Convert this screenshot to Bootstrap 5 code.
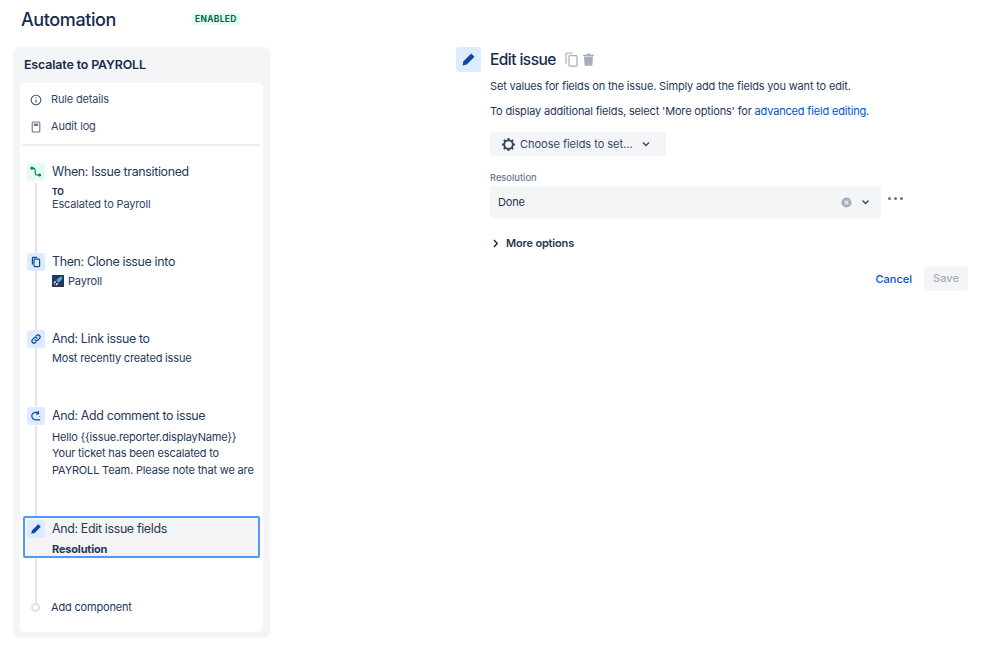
<!DOCTYPE html>
<html lang="en">
<head>
  <meta charset="UTF-8" />
  <meta name="viewport" content="width=device-width, initial-scale=1" />
  <title>Automation</title>
  <link href="https://cdn.jsdelivr.net/npm/bootstrap@5.3.0/dist/css/bootstrap.min.css" rel="stylesheet" />
  <style>
    body {
      font-family: Inter, "Liberation Sans", sans-serif;
      color: #172b4d;
      background: #fff;
      font-size: 11px;
      letter-spacing: -0.17px;
      overflow: hidden;
    }
    .page-head { height: 47px; padding: 9px 0 0 21px; }
    .page-title { font-size: 18px; font-weight: 500; line-height: 22px; width: 171px; margin: 0; letter-spacing: -0.4px; }
    .status-tag {
      background: #e3fcef; color: #006644; font-size: 8.4px; font-weight: 700;
      line-height: 12px; height: 12px; padding: 0 3px; border-radius: 2px; letter-spacing: .35px; margin-top: 4px;
    }
    .rule-panel { width: 257px; height: 591px; margin-left: 13px; background: #f4f5f7; border-radius: 6px; padding: 0 7px; flex-shrink: 0; }
    .rule-name { font-size: 12.4px; font-weight: 600; height: 36px; line-height: 36px; padding-left: 4px; margin: 0; letter-spacing: -0.13px; }
    .rule-card { position: relative; background: #fff; border-radius: 5px; height: 549px; padding: 3px; }
    .side-link { display: flex; align-items: center; height: 27px; color: #344563; }
    .side-link svg { width: 12px; height: 12px; margin: 0 9px 0 7px; flex-shrink: 0; }
    .side-links { height: 60px; margin-bottom: 17px; border-bottom: 2px solid #ebecf0; }
    .rail { position: absolute; left: 15px; top: 100px; height: 420px; width: 2px; background: #e4e6ea; }
    .step { position: relative; display: flex; padding-left: 4px; }
    .step-icon {
      width: 18px; height: 18px; border-radius: 3px; background: #deebff; color: #0747a6;
      display: flex; align-items: center; justify-content: center; flex-shrink: 0; margin-right: 7px;
    }
    .step-icon.is-green { background: #e3fcef; color: #006644; }
    .step-title { font-size: 12.4px; line-height: 18px; color: #253858; letter-spacing: -0.33px; }
    .step-body { color: #253858; line-height: 16.4px; margin-top: 2px; }
    .step-body.is-long { margin-top: 4px; }
    .step-to { font-size: 8.5px; font-weight: 700; line-height: 10px; margin-top: 6px; }
    .step-sub { line-height: 16px; color: #344563; margin-top: -1px; }
    .h-90 { height: 90px; }
    .h-77 { height: 77px; }
    .h-109 { height: 109px; }
    .step-active {
      height: 42px; padding: 2px 0 0 2px; background: #f4f4f4;
      border: 2px solid #4c9aff; border-radius: 2px;
    }
    .step-active .step-body { font-weight: 700; margin-top: 3px; }
    .add-row { display: flex; align-items: center; margin-top: 41px; padding-left: 8px; color: #253858; }
    .add-dot { width: 9px; height: 9px; border-radius: 50%; border: 2px solid #dfe1e6; background: #fff; margin-right: 11px; position: relative; }
    .project-mark { width: 12px; height: 12px; margin-right: 4px; flex-shrink: 0; }
    .edit-panel { width: 512px; margin-left: 186px; }
    .edit-head { display: flex; align-items: center; height: 25px; margin-bottom: 6px; }
    .edit-icon { width: 25px; height: 25px; background: #deebff; color: #0747a6; border-radius: 3px; display: flex; align-items: center; justify-content: center; margin-right: 9px; }
    .edit-title { font-size: 15.5px; font-weight: 500; margin: 0 9px 0 0; line-height: 25px; letter-spacing: -0.55px; }
    .edit-form { padding-left: 34px; color: #253858; }
    .edit-text { margin: 0; height: 25px; line-height: 16px; }
    .edit-form a { color: #0052cc; text-decoration: none; }
    .field-btn {
      display: inline-flex; align-items: center; width: 176px; height: 24px; background: #f4f5f7; border: 0; border-radius: 3px;
      padding: 0 0 0 11px; color: #344563; font-size: 11px; font-weight: 400; margin-top: 4px; letter-spacing: -0.02px;
    }
    .btn-caret { margin-left: 9px; }
    .field-label { font-size: 9.3px; font-weight: 500; color: #6b778c; line-height: 12px; margin-top: 16px; margin-bottom: 2px; letter-spacing: 0; }
    .select-box { width: 391px; height: 32px; background: #f4f5f7; border-radius: 3px; display: flex; align-items: center; padding: 0 11px 0 8px; }
    .select-caret { margin-left: 1px; }
    .more-dots { display: flex; gap: 3px; margin: 11px 0 0 7px; }
    .more-dots i { width: 3px; height: 3px; border-radius: 50%; background: #6b778c; }
    .more-opts { display: flex; align-items: center; font-weight: 600; margin-top: 18px; line-height: 14px; color: #253858; }
    .more-opts svg { margin: 0 7px 0 3px; }
    .form-actions { display: flex; justify-content: flex-end; align-items: center; margin-top: 16px; gap: 12px; }
    .btn-cancel { color: #0052cc; font-weight: 500; background: none; border: 0; padding: 2px 0 0; font-size: 11px; }
    .btn-save { width: 44px; height: 25px; background: #f4f5f7; color: #a5adba; border: 0; border-radius: 3px; font-weight: 500; font-size: 11px; padding: 0; }
  </style>
</head>
<body>
  <div class="page-head d-flex">
    <h1 class="page-title">Automation</h1>
    <span class="status-tag">ENABLED</span>
  </div>

  <div class="d-flex">
    <div class="rule-panel">
      <h2 class="rule-name">Escalate to PAYROLL</h2>
      <div class="rule-card">
        <div class="rail"></div>
        <div class="side-links">
          <div class="side-link">
            <svg viewBox="0 0 12 12" fill="none" stroke="#42526e" stroke-width="1.1"><circle cx="6" cy="6" r="4.8"/><path d="M6 5.4v3M6 3.2v1"/></svg>
            Rule details
          </div>
          <div class="side-link">
            <svg viewBox="0 0 12 12" fill="none" stroke="#6b778c" stroke-width="1.1"><rect x="2.2" y="1" width="7.6" height="10" rx="1"/><path d="M3.8 2.6h4.4v2.4H3.8z" fill="#6b778c" stroke="none"/></svg>
            Audit log
          </div>
        </div>
        <div class="step h-90">
          <div class="step-icon is-green">
            <svg width="12" height="12" viewBox="0 0 12 12" fill="none" stroke="#00875a" stroke-width="1.2"><path d="M2 2.2h1.6c.8 0 1.2.5 1.3 1.2l.6 4.4c.1.8.5 1.2 1.3 1.2H9"/><circle cx="1.9" cy="2.2" r="1" fill="#00875a"/><circle cx="9.6" cy="9" r="1" fill="#00875a"/></svg>
          </div>
          <div>
            <div class="step-title">When: Issue transitioned</div>
            <div class="step-to">TO</div>
            <div class="step-sub">Escalated to Payroll</div>
          </div>
        </div>
        <div class="step h-77">
          <div class="step-icon">
            <svg width="12" height="12" viewBox="0 0 12 12" fill="none" stroke="#0747a6" stroke-width="1.2"><rect x="4" y="3.2" width="5.6" height="7.4" rx=".8"/><path d="M2.4 8.4V2.2c0-.5.3-.8.8-.8h4"/></svg>
          </div>
          <div>
            <div class="step-title">Then: Clone issue into</div>
            <div class="step-body d-flex align-items-center">
              <svg class="project-mark" viewBox="0 0 12 12"><rect width="12" height="12" fill="#253858"/><path d="M10.5 1.5C8 1.7 6 3 4.3 5.5l2.2 2.2C9 6 10.3 4 10.5 1.5z" fill="#4bb5d9"/><path d="M4 6L2.2 6.6 1.4 8.4l2-.3zM6.2 8l-.6 1.8-1.8.8.3-2z" fill="#e9eef5"/><path d="M3 8.8l-1.4 1.6 2-.6z" fill="#ff8b5a"/></svg>
              Payroll
            </div>
          </div>
        </div>
        <div class="step h-77">
          <div class="step-icon">
            <svg width="12" height="12" viewBox="0 0 12 12" fill="none" stroke="#0747a6" stroke-width="1.2" stroke-linecap="round"><path d="M5 7a2 2 0 0 0 2.9 0l1.6-1.6a2 2 0 0 0-2.9-2.9l-.7.7"/><path d="M7 5a2 2 0 0 0-2.9 0L2.5 6.6a2 2 0 0 0 2.9 2.9l.7-.7"/></svg>
          </div>
          <div>
            <div class="step-title">And: Link issue to</div>
            <div class="step-body">Most recently created issue</div>
          </div>
        </div>
        <div class="step h-109">
          <div class="step-icon">
            <svg width="12" height="12" viewBox="0 0 12 12" fill="none" stroke="#0747a6" stroke-width="1.2" stroke-linecap="round"><path d="M7.6 2.8A3.8 3.8 0 1 0 6 9.8h3.6"/><path d="M8.4 1.4v2.4H6.2"/><circle cx="9.8" cy="6.4" r=".5" fill="#0747a6" stroke="none"/></svg>
          </div>
          <div>
            <div class="step-title">And: Add comment to issue</div>
            <div class="step-body is-long">Hello {{issue.reporter.displayName}}<br />Your ticket has been escalated to<br />PAYROLL Team. Please note that we are</div>
          </div>
        </div>
        <div class="step step-active">
          <div class="step-icon">
            <svg width="12" height="12" viewBox="0 0 12 12" fill="#0747a6"><path d="M8.2 1.2l2.6 2.6-6.2 6.2-3.4.8.8-3.4z"/></svg>
          </div>
          <div>
            <div class="step-title">And: Edit issue fields</div>
            <div class="step-body">Resolution</div>
          </div>
        </div>
        <div class="add-row">
          <span class="add-dot"></span>
          Add component
        </div>
      </div>
    </div>

    <div class="edit-panel">
      <div class="edit-head">
        <div class="edit-icon">
          <svg width="15" height="15" viewBox="0 0 12 12" fill="#0747a6"><path d="M8.2 1.2l2.6 2.6-6.2 6.2-3.4.8.8-3.4z"/></svg>
        </div>
        <h2 class="edit-title">Edit issue</h2>
        <svg width="13" height="15" viewBox="0 0 13 15" fill="none" stroke="#a5adba" stroke-width="1.2"><rect x="4" y="3.6" width="8" height="10.6" rx="1"/><path d="M1 11.5V2c0-.7.4-1 1-1h6"/></svg>
        <svg width="13" height="13" viewBox="0 0 13 13" fill="#a5adba" class="ms-1"><path d="M1 1.8h11v1.2H1z"/><path d="M4.5 .6h4v1.4h-4z"/><path d="M2 3.6h9l-.6 8.2c0 .6-.5 1-1 1H3.6c-.5 0-1-.4-1-1z"/></svg>
      </div>
      <div class="edit-form">
        <p class="edit-text">Set values for fields on the issue. Simply add the fields you want to edit.</p>
        <p class="edit-text">To display additional fields, select 'More options' for <a href="#">advanced field editing</a>.</p>
        <button class="field-btn" type="button">
          <svg width="15" height="15" viewBox="0 0 16 16" fill="none" stroke="#344563" stroke-width="2"><circle cx="8" cy="8" r="4.6"/><path d="M8 1v2.5M8 12.5V15M1 8h2.5M12.5 8H15M3 3l1.8 1.8M11.2 11.2L13 13M3 13l1.8-1.8M11.2 4.8L13 3"/></svg>
          <span class="ms-1">Choose fields to set...</span>
          <svg class="btn-caret" width="8" height="6" viewBox="0 0 8 6" fill="none" stroke="#344563" stroke-width="1.4"><path d="M1 1.5l3 3 3-3"/></svg>
        </button>
        <div class="field-label">Resolution</div>
        <div class="d-flex align-items-start">
          <div class="select-box">
            <span class="flex-grow-1">Done</span>
            <svg width="11" height="11" viewBox="0 0 11 11" class="me-2"><circle cx="5.5" cy="5.5" r="5" fill="#a5adba"/><path d="M3.6 3.6l3.8 3.8M7.4 3.6l-3.8 3.8" stroke="#f4f5f7" stroke-width="1.2"/></svg>
            <svg class="select-caret" width="9" height="6" viewBox="0 0 8 6" fill="none" stroke="#344563" stroke-width="1.4"><path d="M1 1.5l3 3 3-3"/></svg>
          </div>
          <div class="more-dots"><i></i><i></i><i></i></div>
        </div>
        <div class="more-opts">
          <svg width="6" height="9" viewBox="0 0 6 9" fill="none" stroke="#172b4d" stroke-width="1.5"><path d="M1 1l3.2 3.5L1 8"/></svg>
          More options
        </div>
        <div class="form-actions">
          <button class="btn-cancel" type="button">Cancel</button>
          <button class="btn-save" type="button">Save</button>
        </div>
      </div>
    </div>
  </div>
  <script src="https://cdn.jsdelivr.net/npm/bootstrap@5.3.0/dist/js/bootstrap.bundle.min.js"></script>
</body>
</html>
